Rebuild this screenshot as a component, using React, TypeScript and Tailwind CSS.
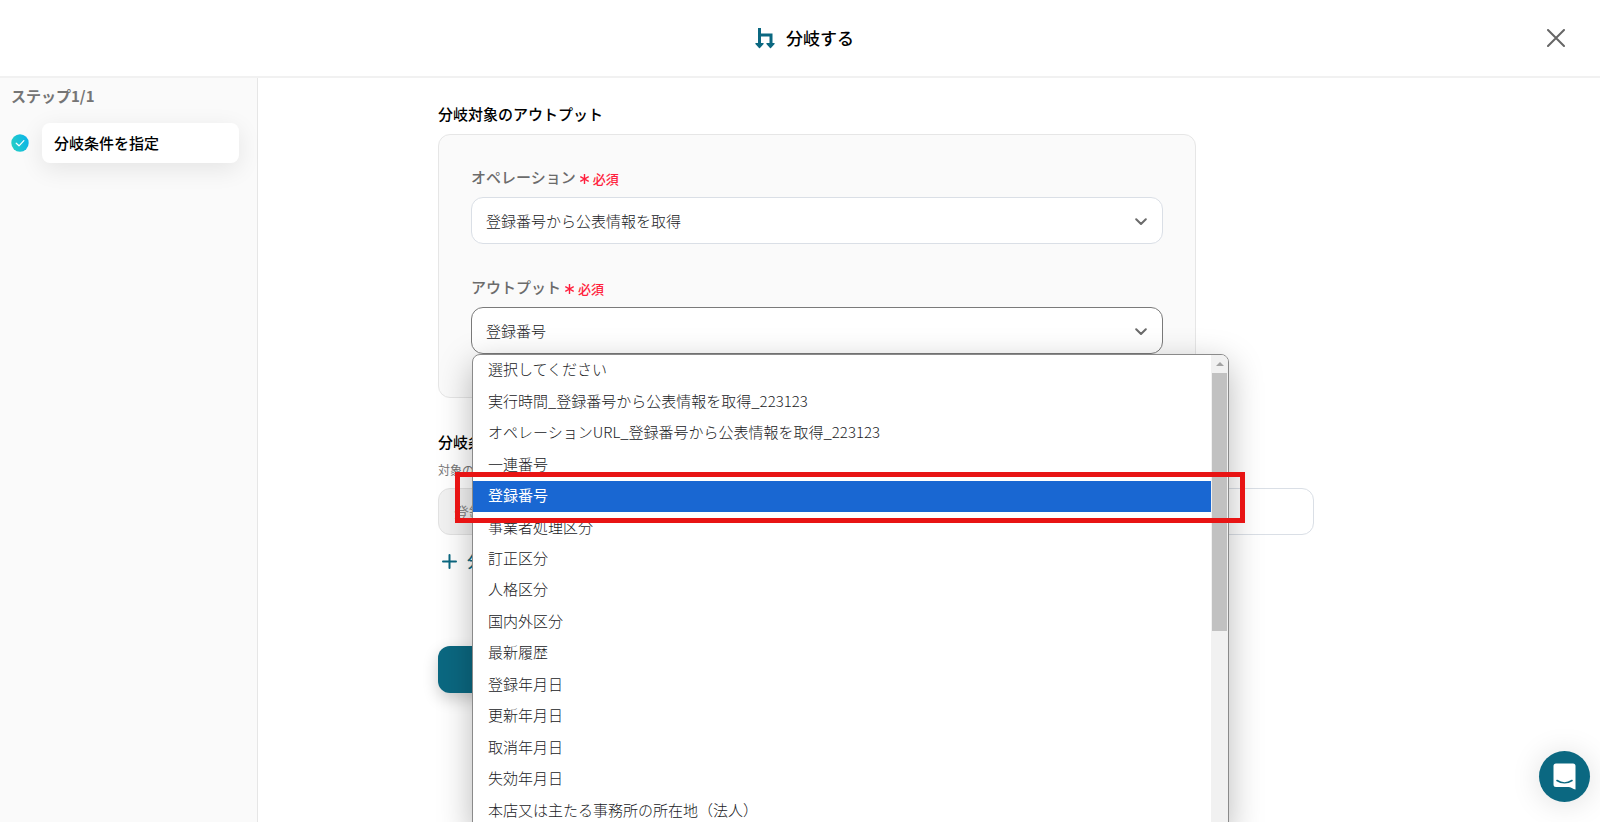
import React from 'react'

const outputs = [
    '選択してください',
    '実行時間_登録番号から公表情報を取得_223123',
    'オペレーションURL_登録番号から公表情報を取得_223123',
    '一連番号',
    '登録番号',
    '事業者処理区分',
    '訂正区分',
    '人格区分',
    '国内外区分',
    '最新履歴',
    '登録年月日',
    '更新年月日',
    '取消年月日',
    '失効年月日',
    '本店又は主たる事務所の所在地（法人）',
]

function BranchIcon() {
    return (
        <svg width="20" height="21" viewBox="0 0 20 21" fill="none" className="text-[#0b6881]">
            <path d="M4.5 0V16M4.5 7H16V16" stroke="currentColor" strokeWidth="3" />
            <path d="M0.8 15h7.4a.6.6 0 0 1 .4 1L5 19.9a.7.7 0 0 1-1 0L.4 16a.6.6 0 0 1 .4-1zM11.8 15h7.4a.6.6 0 0 1 .4 1L16 19.9a.7.7 0 0 1-1 0L11.4 16a.6.6 0 0 1 .4-1z" fill="currentColor" />
        </svg>
    )
}

function CheckIcon() {
    return (
        <svg width="18" height="18" viewBox="0 0 18 18" fill="none" className="shrink-0">
            <defs>
                <linearGradient id="check-fill" x1="0" y1="12" x2="18" y2="6" gradientUnits="userSpaceOnUse">
                    <stop stopColor="#25cfc4" />
                    <stop offset="1" stopColor="#0cb4ea" />
                </linearGradient>
            </defs>
            <circle cx="9" cy="9" r="8.7" fill="url(#check-fill)" />
            <path d="M5.2 9.2 8 11.8 12.9 6.6" stroke="#fff" strokeWidth="1.2" strokeLinecap="round" strokeLinejoin="round" />
        </svg>
    )
}

function Chevron() {
    return (
        <svg width="12" height="8" viewBox="0 0 12 8" fill="none" className="pointer-events-none absolute right-4 top-[21px]">
            <path d="M1.2 1.2 6 6 10.8 1.2" stroke="#6b6b6b" strokeWidth="2" strokeLinecap="round" strokeLinejoin="round" />
        </svg>
    )
}

function FieldLabel({ htmlFor, text }: { htmlFor: string; text: string }) {
    return (
        <label htmlFor={htmlFor} className="flex h-[22px] items-center gap-1 font-medium text-[#6b6b6b]">
            {text}
            <span className="flex items-center gap-1 pt-1 text-[13px] leading-5 text-[#ff1f3d]">
                <svg width="9" height="10" viewBox="0 0 9 10" stroke="currentColor" strokeWidth="1.4">
                    <path d="M4.5 0v10M.3 2.5l8.4 5M8.7 2.5l-8.4 5" />
                </svg>
                必須
            </span>
        </label>
    )
}

function OutputMenu() {
    return (
        <div className="absolute left-px top-[47px] z-10 w-[757px]">
            <div className="flex overflow-hidden rounded-t-lg border border-[#8a8a8a] bg-white shadow-[0_10px_34px_rgba(0,0,0,0.28)]">
                <ul role="listbox" aria-label="アウトプット" className="grid h-[472px] flex-1 auto-rows-fr">
                    {outputs.map((item) => (
                        <li
                            key={item}
                            role="option"
                            aria-selected={item === '登録番号'}
                            className={`flex items-center pb-[3px] pl-[15px] ${item === '登録番号' ? 'bg-[#1967d2] text-white' : 'font-light text-[#202124]'}`}
                        >
                            {item}
                        </li>
                    ))}
                </ul>
                <div className="flex w-[17px] flex-col items-center bg-[#f1f1f1]">
                    <div className="flex h-[18px] items-center">
                        <svg width="8" height="4" viewBox="0 0 8 4">
                            <path d="M0 4 4 0l4 4z" fill="#a3a3a3" />
                        </svg>
                    </div>
                    <div className="h-[258px] w-[15px] bg-[#c1c1c1]"></div>
                </div>
            </div>
            <div className="pointer-events-none absolute -left-[17px] -right-4 top-[118px] h-[51px] border-5 border-[#e81414]"></div>
        </div>
    )
}

export default function App() {
    return (
        <div className='flex h-screen flex-col overflow-hidden bg-white font-["Noto_Sans_CJK_JP",sans-serif] text-[15px] leading-6 text-black'>
            <header className="relative flex h-[78px] shrink-0 items-center justify-center gap-[11px] border-b-2 border-[#f1f1f1] pl-[9px]">
                <BranchIcon />
                <h1 className="text-[17px] font-medium">分岐する</h1>
                <button type="button" aria-label="閉じる" className="absolute right-[35px] top-1/2 -translate-y-1/2">
                    <svg width="18" height="18" viewBox="0 0 18 18" stroke="#666" strokeWidth="2" strokeLinecap="round">
                        <path d="M1 1l16 16M17 1 1 17" />
                    </svg>
                </button>
            </header>

            <div className="flex min-h-0 flex-1">
                <aside className="w-[258px] shrink-0 border-r border-[#e6e6e6] bg-[#fafafa] pl-[11px] pr-[18px] pt-[6px]">
                    <p className="font-bold text-[#757575]">ステップ1/1</p>
                    <div className="mt-[15px] flex items-center gap-[13px]">
                        <CheckIcon />
                        <div className="flex h-10 flex-1 items-center rounded-lg bg-white pl-3 font-medium shadow-[0_6px_24px_rgba(0,0,0,0.09)]">
                            分岐条件を指定
                        </div>
                    </div>
                </aside>

                <main className="min-w-0 flex-1 overflow-hidden pl-[180px] pt-6">
                    <form className="max-w-[876px]">
                        <h2 className="font-medium">分岐対象のアウトプット</h2>
                        <div className="mt-2 flex w-[758px] flex-col gap-8 rounded-xl border border-[#e6e6e6] bg-[#fafafa] px-8 pb-[43px] pt-[31px]">
                            <div>
                                <FieldLabel htmlFor="operation" text="オペレーション" />
                                <div className="relative mt-[9px]">
                                    <select id="operation" className="block h-[47px] w-full appearance-none rounded-xl border border-[#dadfe6] bg-white px-[14px] font-light text-[#202124]">
                                        <option>登録番号から公表情報を取得</option>
                                    </select>
                                    <Chevron />
                                </div>
                            </div>
                            <div>
                                <FieldLabel htmlFor="output" text="アウトプット" />
                                <div className="relative mt-[9px]">
                                    <select id="output" defaultValue="登録番号" className="block h-[47px] w-full appearance-none rounded-xl border border-[#7a7a7a] bg-white px-[14px] font-light text-[#202124]">
                                        {outputs.map((item) => (
                                            <option key={item}>{item}</option>
                                        ))}
                                    </select>
                                    <Chevron />
                                    <OutputMenu />
                                </div>
                            </div>
                        </div>

                        <h2 className="mt-8 font-medium">分岐条件</h2>
                        <div className="mt-1 flex items-end gap-4">
                            <div className="flex-1">
                                <label htmlFor="target" className="block text-xs leading-6 text-[#757575]">対象の値</label>
                                <input id="target" readOnly value="登録番号" className="mt-[6px] h-[47px] w-full rounded-xl border border-[#e2e2e2] bg-[#f1f1f1] px-[15px] text-[#8a8a8a]" />
                            </div>
                            <input aria-label="条件の値" className="h-[47px] flex-1 rounded-xl border border-[#dadfe6] bg-white px-[15px]" />
                        </div>
                        <button type="button" className="mt-[14px] flex items-center gap-[10px] pl-1 font-medium text-[#0b6881]">
                            <svg width="15" height="15" viewBox="0 0 15 15" stroke="currentColor" strokeWidth="2" strokeLinecap="round">
                                <path d="M7.5 1v13M1 7.5h13" />
                            </svg>
                            分岐
                        </button>
                        <button type="button" aria-label="保存する" className="mt-[73px] block h-[47px] w-full max-w-[758px] rounded-xl bg-[#0b6881] shadow-[0_6px_16px_rgba(0,0,0,0.2)]"></button>
                    </form>
                </main>
            </div>

            <button type="button" aria-label="チャット" className="fixed bottom-5 right-[10px] flex size-[51px] items-center justify-center rounded-full bg-[#0b6881] shadow-[0_2px_30px_rgba(0,0,0,0.13)]">
                <svg width="23" height="27" viewBox="0 0 23 27" fill="none">
                    <path d="M3 .5h17a2.5 2.5 0 0 1 2.5 2.5V26.5c-2.5-.5-5-2.5-7-2.500H3A2.500 2.500 0 0 1 .5 21.500V3A2.500 2.500 0 0 1 3 .5z" fill="#fff" />
                    <path d="M4 17.500c4.500 3 10.500 3 15 0" stroke="#0b6881" strokeWidth="1.600" strokeLinecap="round" />
                </svg>
            </button>
        </div>
    )
}
